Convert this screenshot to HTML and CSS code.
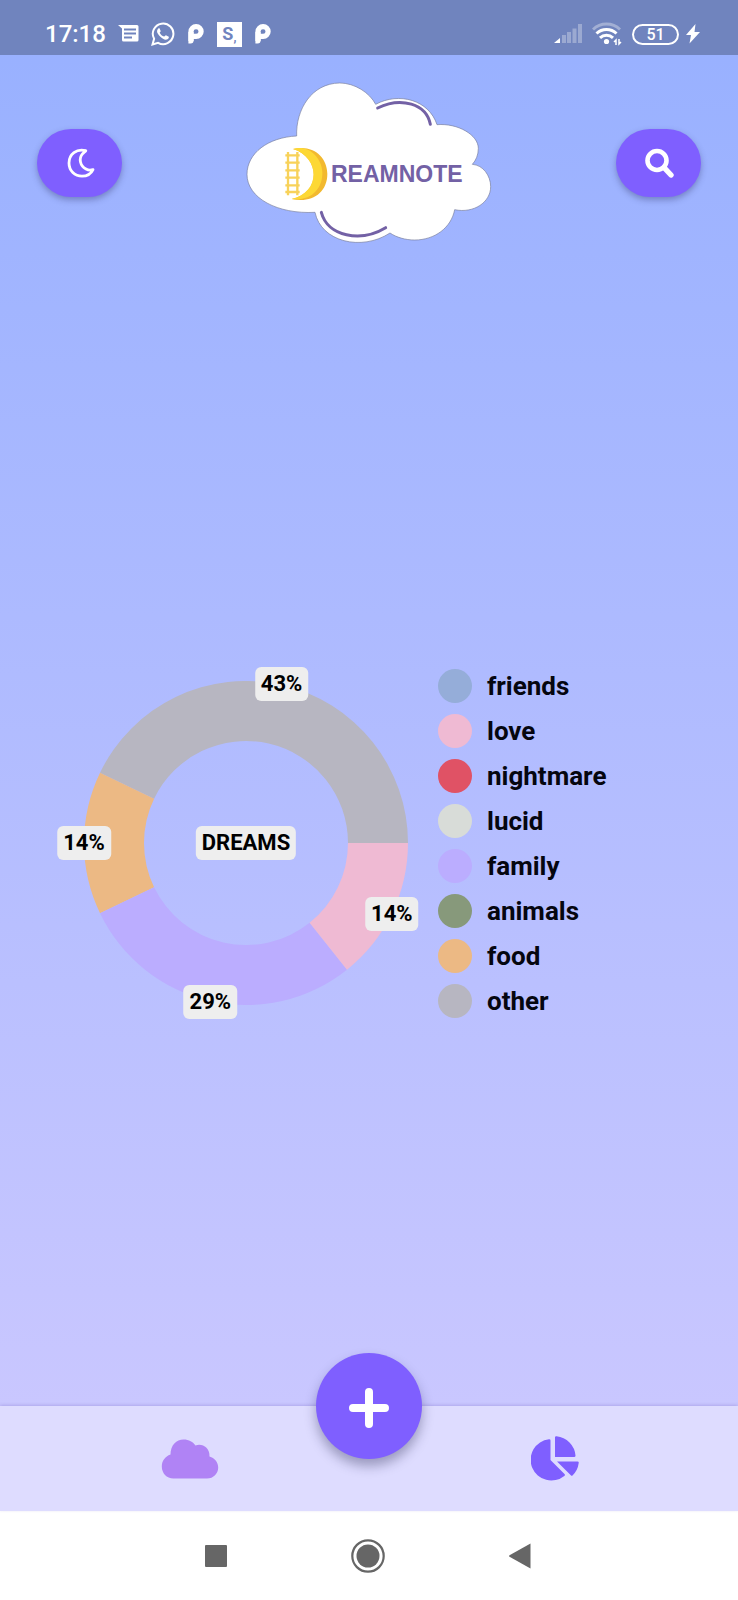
FILE: index.html
```html
<!DOCTYPE html>
<html lang="en">
<head>
<meta charset="utf-8">
<meta name="viewport" content="width=device-width, initial-scale=1">
<title>Dreamnote</title>
<link rel="stylesheet" href="styles.css">
</head>
<body>
<div class="screen">
  <div class="status-bar">
    <time class="clock">17:18</time>
    <div class="notifications">
      <svg width="21" height="18" viewBox="0 0 21 18" aria-hidden="true"><path fill="#fff" fill-rule="evenodd" d="M0 0h19a1.500 1.500 0 0 1 1.500 1.500v13.500a1.500 1.500 0 0 1-1.500 1.500h-13.500a1.500 1.500 0 0 1-1.500-1.500v-11.500zM6 3.500v2h12v-2zM6 7.500v2h12v-2zM6 11.500v2h8v-2z"/></svg>
      <svg width="24" height="24" viewBox="0 0 24 24" aria-hidden="true"><path fill="none" stroke="#fff" stroke-width="2" d="M1.500 22.500l1.600-5.700a10.300 10.300 0 1 1 4 4z"/><path fill="#fff" d="M8.500 6.300c-.5-.1-1 0-1.400.5-2.300 2.500-.4 5.300 2 7.700 2.600 2.500 5.300 4 7.400 2.700 1-.6 1.500-1.500 1.300-2.500l-2.900-1.400c-.5-.1-1.300 1.400-1.800 1.300-1.900-.6-3.500-2.100-4.400-3.900-.1-.5 1.200-1.200 1-1.800z"/></svg>
      <svg width="18" height="22" viewBox="0 0 18 22" aria-hidden="true"><path fill="none" stroke="#fff" stroke-width="5.200" stroke-linejoin="round" d="M4 18V8.500A5 5 0 0 1 9 3.600h.2a4.900 4.900 0 0 1 0 9.800H4.500"/><path fill="#fff" d="M1.400 9h5.200v8.500a3 3 0 0 1-3 3H1.400z"/></svg>
      <span class="app-badge">S<small>,</small></span>
      <svg width="18" height="22" viewBox="0 0 18 22" aria-hidden="true"><path fill="none" stroke="#fff" stroke-width="5.200" stroke-linejoin="round" d="M4 18V8.500A5 5 0 0 1 9 3.600h.2a4.900 4.900 0 0 1 0 9.800H4.500"/><path fill="#fff" d="M1.400 9h5.200v8.500a3 3 0 0 1-3 3H1.400z"/></svg>
    </div>
    <div class="system">
      <svg width="28" height="20" viewBox="0 0 28 20" aria-hidden="true"><path fill="#fff" d="M0 19l6-5v5z"/><path fill="#fff" fill-opacity=".3" d="M8 11h4v8H8zM13 8h4v11h-4zM18.500 4.500h4V19h-4zM24 0h4v19h-4z"/></svg>
      <svg width="30" height="24" viewBox="0 0 30 24" aria-hidden="true"><g fill="none" stroke="#fff" stroke-width="3"><path stroke-opacity=".35" d="M1 7.500a19.500 19.500 0 0 1 27 0"/><path d="M4.500 11.500a14.500 14.500 0 0 1 20 0"/><path d="M8 15.800a9.500 9.500 0 0 1 13 0"/></g><circle cx="14.500" cy="19.500" r="2.600" fill="#fff"/><path fill="none" stroke="#fff" stroke-width="1.500" d="M24 23v-5l-2 2M27 17v5l2-2"/></svg>
      <span class="battery">51</span>
      <svg width="14" height="20" viewBox="0 0 14 20" aria-hidden="true"><path fill="#fff" d="M9.500 0L0 11h5L3.500 19.500 14 8H8.500z"/></svg>
    </div>
  </div>

  <header class="header">
    <button class="pill" type="button" aria-label="Night mode">
      <svg width="32" height="32" viewBox="0 0 32 32" aria-hidden="true"><path fill="none" stroke="#fff" stroke-width="2.800" stroke-linejoin="round" d="M21.800 3.700C12.500 1 5 7.700 5 16c0 7.700 5.800 13.200 13 13.200 5 0 9.200-2.800 11-6.600-2.400.8-4.900.6-7-.5C16 19 14.500 11.500 18.500 6.900c1-1.200 2.200-2 3.300-3.200z"/></svg>
    </button>
    <svg class="logo" width="260" height="175" viewBox="-2 0 780 525" role="img" aria-label="Dreamnote">
      <path fill="#fff" stroke="#777d9c" stroke-width="2" d="M171 183C168 105 215 25 300 24C345 24 390 53 408 88C478 50 568 75 592 149C655 144 716 180 716 220C716 240 709 256 698 268C730 270 753 302 753 335C753 382 702 416 645 404C635 458 585 495 525 495C497 495 470 487 451 474C365 530 244 500 226 412C115 418 22 370 22 298C22 235 85 187 171 183Z"/>
      <path fill="none" stroke="#7361a5" stroke-width="9" stroke-linecap="round" d="M414 99C485 64 560 87 572 148M245 412C264 485 363 503 438 458"/>
      <path fill="#f2b92f" d="M160 222C218 207 263 244 263 297C263 354 215 386 156 372C246 354 242 247 160 222Z"/>
      <path fill="#fdd835" d="M160 222C205 209 245 245 248 290C250 340 215 379 156 372C244 352 242 247 160 222Z"/>
      <path fill="none" stroke="#f8d25a" stroke-width="7" d="M145 231V361M173 231V361M137 241H180M137 263H180M137 286H180M137 308H180M137 331H180M137 351H180"/>
      <text class="logo-text" x="274" y="320">REAMNOTE</text>
    </svg>
    <button class="pill" type="button" aria-label="Search">
      <svg width="30" height="32" viewBox="0 0 30 32" aria-hidden="true"><circle cx="13" cy="13.500" r="9.500" fill="none" stroke="#fff" stroke-width="4.600"/><path stroke="#fff" stroke-width="5.400" stroke-linecap="round" d="M20 20.500l7 7.500"/></svg>
    </button>
  </header>

  <main class="main">
    <div class="donut">
      <svg class="donut-ring" viewBox="-162 -162 324 324" aria-hidden="true">
        <path fill="#b7b6c1" d="M162 0A162 162 0 0 0-145.960-70.290L-91.900-44.260A102 102 0 0 1 102 0Z"/>
        <path fill="#ecb984" d="M-145.960-70.290A162 162 0 0 0-145.960 70.290L-91.900 44.260A102 102 0 0 1-91.900-44.260Z"/>
        <path fill="#bbadff" d="M-145.960 70.290A162 162 0 0 0 101 126.660L63.600 79.750A102 102 0 0 1-91.900 44.260Z"/>
        <path fill="#efbad3" d="M101 126.660A162 162 0 0 0 162 0H102A102 102 0 0 1 63.600 79.750Z"/>
      </svg>
      <span class="tag tag-title">DREAMS</span>
      <span class="tag tag-other">43%</span>
      <span class="tag tag-love">14%</span>
      <span class="tag tag-family">29%</span>
      <span class="tag tag-food">14%</span>
    </div>
    <ul class="legend">
      <li class="friends">friends</li>
      <li class="love">love</li>
      <li class="nightmare">nightmare</li>
      <li class="lucid">lucid</li>
      <li class="family">family</li>
      <li class="animals">animals</li>
      <li class="food">food</li>
      <li class="other">other</li>
    </ul>
  </main>

  <nav class="tabs" aria-label="Main">
    <button class="tab" type="button" aria-label="Dreams">
      <svg width="58" height="40" viewBox="0 0 58 40" aria-hidden="true"><path fill="#b083f5" d="M12.500 39.500C5.500 39.500 .8 34 .8 27.500c0-5.500 3.200-10 8.700-12C9.500 6 15.500 .5 22.500 .5c5.500 0 9.500 2.500 12 6 6-2.500 14.500 1.500 14 11 5 1.500 8.700 5.500 8.700 11 0 6-4.700 11-11.200 11z"/></svg>
    </button>
    <button class="add" type="button" aria-label="Add dream">
      <svg width="42" height="46" viewBox="0 0 42 46" aria-hidden="true"><path stroke="#fff" stroke-width="8" stroke-linecap="round" d="M21 9v32M5 25h32"/></svg>
    </button>
    <button class="tab" type="button" aria-label="Statistics">
      <svg width="48" height="46" viewBox="0 0 48 46" aria-hidden="true"><path fill="#7f5fff" d="M18 3.200q1.500-.2 1.500 1.300V24L33.500 38q1 1-.2 1.900A20.700 20.700 0 1 1 18 3.200zM24 1.500Q24 0 25.500.2A21 21 0 0 1 44.500 19.500q.1 1.500-1.400 1.500H24zM26 25.500H46.500q1.500 0 1.200 1.500A21 21 0 0 1 41.500 39.500q-.9.700-1.700-.2z"/></svg>
    </button>
  </nav>

  <nav class="system-nav" aria-label="System">
    <button type="button" aria-label="Recent apps"><svg width="22" height="22" viewBox="0 0 22 22" aria-hidden="true"><rect width="22" height="22" rx="1" fill="#666"/></svg></button>
    <button type="button" aria-label="Home"><svg width="34" height="34" viewBox="0 0 34 34" aria-hidden="true"><circle cx="17" cy="17" r="15.700" fill="none" stroke="#666" stroke-width="2.200"/><circle cx="17" cy="17" r="11.500" fill="#666"/></svg></button>
    <button type="button" aria-label="Back"><svg width="22" height="26" viewBox="0 0 22 26" aria-hidden="true"><path fill="#666" d="M21.500.5v25L.5 13.800q-.8-.8 0-1.600z"/></svg></button>
  </nav>
</div>
</body>
</html>
```
FILE: styles.css
```css
* {
  box-sizing: border-box;
}

body {
  margin: 0;
  font-family: Roboto, "Liberation Sans", sans-serif;
  color: #05060f;
}

button {
  display: flex;
  align-items: center;
  justify-content: center;
  padding: 0;
  border: 0;
  background: none;
  cursor: pointer;
}

svg {
  display: block;
  flex: none;
}

.screen {
  display: flex;
  flex-direction: column;
  min-height: 100vh;
  background: linear-gradient(#97b0ff, #d0caff);
}

.status-bar {
  display: flex;
  align-items: center;
  height: 55px;
  padding: 13px 38px 0 45px;
  background: #7084be;
  color: #fff;
}

.clock {
  margin-right: 12px;
  font-size: 24px;
  font-weight: 500;
  line-height: 28px;
}

.notifications {
  display: flex;
  align-items: center;
  gap: 12px;
}

.app-badge {
  display: flex;
  justify-content: center;
  width: 25px;
  height: 25px;
  background: #fff;
  color: #7084be;
  font-size: 18px;
  font-weight: 700;
  line-height: 24px;
}

.app-badge small {
  font-size: 12px;
  line-height: 32px;
}

.system {
  display: flex;
  align-items: center;
  gap: 10px;
  margin-left: auto;
}

.battery {
  width: 47px;
  height: 21px;
  border: 2px solid #fff;
  border-radius: 11px;
  font-size: 16px;
  font-weight: 500;
  line-height: 18px;
  text-align: center;
}

.system svg:last-child {
  margin-left: -3px;
}

.header {
  display: flex;
  align-items: center;
  justify-content: space-between;
  padding: 20px 37px 30px;
}

.pill {
  width: 85px;
  height: 68px;
  border-radius: 34px;
  background: #7f5fff;
  box-shadow: 0 3px 6px rgba(40, 40, 90, 0.35);
}

.logo-text {
  font-family: "Liberation Sans", Arial, sans-serif;
  font-size: 69px;
  font-weight: 700;
  fill: #7361a5;
}

.main {
  display: flex;
  flex: 1;
  align-items: center;
  gap: 30px;
  padding: 0 32px 0 84px;
}

.donut {
  position: relative;
  flex: 0 1 324px;
}

.donut-ring {
  width: 100%;
}

.tag {
  position: absolute;
  padding: 0 6px;
  border-radius: 6px;
  background: #eee;
  color: #000;
  font-size: 22px;
  font-weight: 700;
  line-height: 34px;
  transform: translate(-50%, -50%);
}

.tag-title {
  left: 50%;
  top: 50%;
}

.tag-other {
  left: 61%;
  top: 1%;
}

.tag-love {
  left: 95%;
  top: 72%;
}

.tag-family {
  left: 39%;
  top: 99%;
}

.tag-food {
  left: 0;
  top: 50%;
}

.legend {
  display: flex;
  flex-direction: column;
  gap: 11px;
  margin: 0;
  padding: 0;
  list-style: none;
  font-size: 26px;
  font-weight: 700;
  line-height: 34px;
}

.legend li {
  display: flex;
  align-items: center;
  gap: 15px;
}

.legend li::before {
  content: "";
  width: 34px;
  height: 34px;
  border-radius: 50%;
  background: currentColor;
}

.legend .friends::before { background: #95add9; }
.legend .love::before { background: #efbad3; }
.legend .nightmare::before { background: #e05265; }
.legend .lucid::before { background: #d8dcd8; }
.legend .family::before { background: #bbadff; }
.legend .animals::before { background: #87997b; }
.legend .food::before { background: #ecb984; }
.legend .other::before { background: #b7b6c1; }

.tabs {
  position: relative;
  display: flex;
  align-items: center;
  justify-content: space-between;
  height: 105px;
  padding: 0 151px 0 158px;
  background: #dedcff;
  box-shadow: 0 -1px 3px rgba(100, 80, 180, 0.25);
}

.tab {
  width: 64px;
  height: 64px;
}

.add {
  position: absolute;
  top: 0;
  left: 50%;
  width: 106px;
  height: 106px;
  border-radius: 50%;
  background: #7f5fff;
  box-shadow: 0 7px 12px rgba(30, 30, 70, 0.35);
  transform: translate(-50%, -50%);
}

.system-nav {
  display: flex;
  align-items: center;
  justify-content: space-between;
  height: 89px;
  padding: 0 194px 0 192px;
  background: #fff;
}

.system-nav button {
  width: 48px;
  height: 48px;
}
```
